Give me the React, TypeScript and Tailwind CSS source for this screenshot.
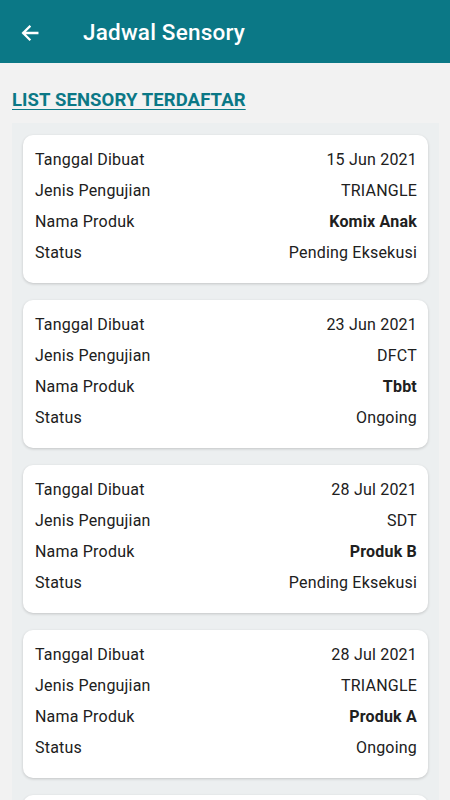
import React from 'react';

interface Jadwal {
  tanggal: string;
  jenis: string;
  produk: string;
  status: string;
}

const jadwalList: Jadwal[] = [
  { tanggal: '15 Jun 2021', jenis: 'TRIANGLE', produk: 'Komix Anak', status: 'Pending Eksekusi' },
  { tanggal: '23 Jun 2021', jenis: 'DFCT', produk: 'Tbbt', status: 'Ongoing' },
  { tanggal: '28 Jul 2021', jenis: 'SDT', produk: 'Produk B', status: 'Pending Eksekusi' },
  { tanggal: '28 Jul 2021', jenis: 'TRIANGLE', produk: 'Produk A', status: 'Ongoing' },
  { tanggal: '02 Agu 2021', jenis: 'DFCT', produk: 'Produk C', status: 'Ongoing' },
];

const Row: React.FC<{ label: string; value: string; bold?: boolean }> = ({ label, value, bold }) => (
  <div className="flex h-[31px] items-center justify-between">
    <span>{label}</span>
    <span className={bold ? 'font-bold' : ''}>{value}</span>
  </div>
);

const JadwalCard: React.FC<{ item: Jadwal }> = ({ item }) => (
  <div className="rounded-[10px] bg-white pl-3 pr-[11px] pt-[9px] pb-[15px] shadow-[0_1px_3px_rgba(0,0,0,0.18)]">
    <Row label="Tanggal Dibuat" value={item.tanggal} />
    <Row label="Jenis Pengujian" value={item.jenis} />
    <Row label="Nama Produk" value={item.produk} bold />
    <Row label="Status" value={item.status} />
  </div>
);

export default function App() {
  return (
    <div
      className="h-[800px] w-[450px] overflow-hidden bg-[#f2f2f2] text-[16px] tracking-[0.2px] text-[#202020]"
      style={{ fontFamily: 'Roboto, "Liberation Sans", sans-serif' }}
    >
      <header className="flex h-[63px] items-center bg-[#0b7886] pt-[3px] text-white">
        <button className="ml-[18px] flex h-6 w-6 items-center justify-center">
          <svg width="22" height="22" viewBox="0 0 24 24" fill="none">
            <path d="M20 12H5M11.5 5L4.5 12l7 7" stroke="white" strokeWidth="2.5" strokeLinecap="square" />
          </svg>
        </button>
        <h1 className="ml-[41px] text-[22.5px] font-medium tracking-[0.2px]">Jadwal Sensory</h1>
      </header>

      <div className="px-3 pt-[27px]">
        <h2 className="text-[18.5px] font-bold leading-5 tracking-[0.1px] text-[#0b7886] underline underline-offset-[3px]">
          LIST SENSORY TERDAFTAR
        </h2>
        <div className="mt-[13px] flex w-[427px] flex-col gap-[17px] bg-[#eceff0] px-[11px] pt-3">
          {jadwalList.map((item, i) => (
            <JadwalCard key={i} item={item} />
          ))}
        </div>
      </div>
    </div>
  );
}
